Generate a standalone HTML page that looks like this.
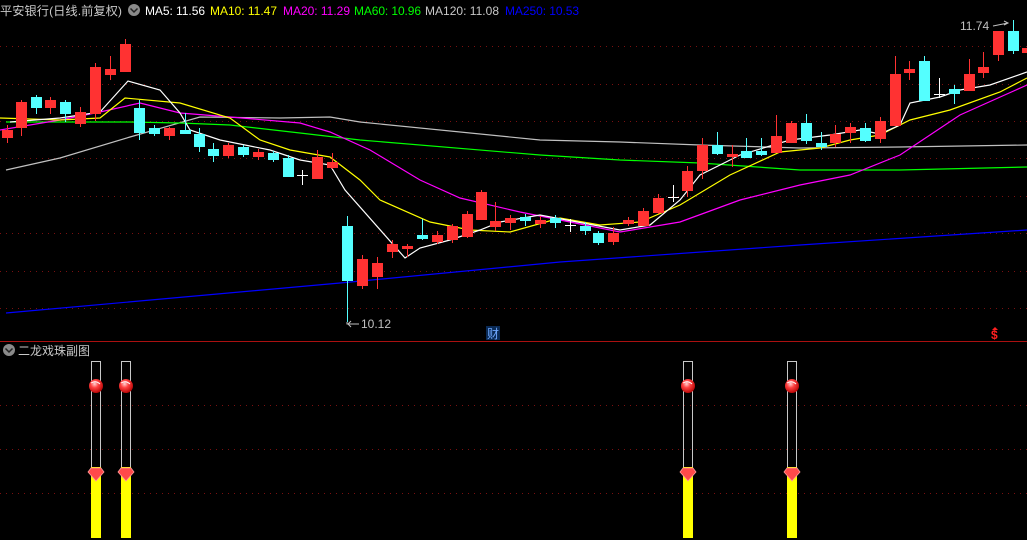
<!DOCTYPE html>
<html><head><meta charset="utf-8"><style>
html,body{margin:0;padding:0;background:#000;width:1027px;height:540px;overflow:hidden}
svg{display:block}
text{font-family:"Liberation Sans","Noto Sans CJK SC",sans-serif;font-size:12px}
.r{fill:#ff3232;stroke:#ff3232}
.c{fill:#54ffff;stroke:#54ffff}
.wr{stroke:#ff3232;stroke-width:1}
.wc{stroke:#54ffff;stroke-width:1}
.g{stroke:#7a1010;stroke-width:1;stroke-dasharray:1 5}
polyline{fill:none;stroke-width:1.2}
</style></head><body>
<svg width="1027" height="540" viewBox="0 0 1027 540" xmlns="http://www.w3.org/2000/svg">
<g>
<line class="g" x1="0" y1="46.5" x2="1027" y2="46.5"/>
<line class="g" x1="0" y1="84.5" x2="1027" y2="84.5"/>
<line class="g" x1="0" y1="121.5" x2="1027" y2="121.5"/>
<line class="g" x1="0" y1="158.5" x2="1027" y2="158.5"/>
<line class="g" x1="0" y1="196.5" x2="1027" y2="196.5"/>
<line class="g" x1="0" y1="233.5" x2="1027" y2="233.5"/>
<line class="g" x1="0" y1="271.5" x2="1027" y2="271.5"/>
<line class="g" x1="0" y1="308.5" x2="1027" y2="308.5"/>
<line class="g" x1="0" y1="405.5" x2="1027" y2="405.5"/>
<line class="g" x1="0" y1="449.5" x2="1027" y2="449.5"/>
<line class="g" x1="0" y1="493.5" x2="1027" y2="493.5"/>
</g>
<polyline stroke="#c0c0c0" points="6,170 60,158 130,137 200,117 280,118 330,117 360,122 540,140 620,142 700,145 800,148 900,147 1027,145"/>
<polyline stroke="#00ff00" points="6,122 130,122 180,123 230,125 300,133 360,140 540,155 620,160 700,163 800,170 900,170 1027,167"/>
<polyline stroke="#0000ff" points="6,313 340,283 560,262 800,245 1027,230"/>
<polyline stroke="#ff00ff" points="0,130 60,120 100,112 140,103 180,113 230,117 300,123 330,132 370,150 420,180 460,198 520,212 560,220 620,232 680,222 740,200 800,185 850,175 900,155 960,115 1027,85"/>
<polyline stroke="#ffff00" points="0,118 60,120 100,118 125,98 180,103 230,118 260,140 290,150 330,157 360,180 380,200 430,222 470,230 510,232 560,218 600,225 640,222 680,205 730,175 780,152 820,148 850,140 880,135 910,120 950,110 1000,92 1027,78"/>
<polyline stroke="#ffffff" points="10,122 60,118 100,112 128,81 160,90 180,113 190,130 220,140 270,150 300,160 330,165 345,190 405,258 420,248 450,240 480,230 500,222 540,215 620,230 650,225 680,200 700,175 740,155 790,140 830,135 860,130 880,134 900,125 910,103 940,97 960,90 990,85 1027,72"/>
<g>
<line class="wr" x1="7.5" y1="125" x2="7.5" y2="143"/><rect class="r" x="2.5" y="130.5" width="10" height="7"/>
<line class="wr" x1="21.5" y1="100" x2="21.5" y2="136"/><rect class="r" x="16.5" y="102.5" width="10" height="25"/>
<line class="wc" x1="36.5" y1="95" x2="36.5" y2="114"/><rect class="c" x="31.5" y="97.5" width="10" height="10"/>
<line class="wr" x1="50.5" y1="97" x2="50.5" y2="114"/><rect class="r" x="45.5" y="100.5" width="10" height="7"/>
<line class="wc" x1="65.5" y1="100" x2="65.5" y2="122"/><rect class="c" x="60.5" y="102.5" width="10" height="11"/>
<line class="wr" x1="80.5" y1="107" x2="80.5" y2="127"/><rect class="r" x="75.5" y="112.5" width="10" height="11"/>
<line class="wr" x1="95.5" y1="63" x2="95.5" y2="121"/><rect class="r" x="90.5" y="67.5" width="10" height="46"/>
<line class="wr" x1="110.5" y1="56" x2="110.5" y2="80"/><rect class="r" x="105.5" y="69.5" width="10" height="5"/>
<line class="wr" x1="125.5" y1="39" x2="125.5" y2="72"/><rect class="r" x="120.5" y="44.5" width="10" height="27"/>
<line class="wc" x1="139.5" y1="100" x2="139.5" y2="140"/><rect class="c" x="134.5" y="108.5" width="10" height="24"/>
<line class="wc" x1="154.5" y1="125" x2="154.5" y2="136"/><rect class="c" x="149.5" y="128.5" width="10" height="5"/>
<line class="wr" x1="169.5" y1="127" x2="169.5" y2="140"/><rect class="r" x="164.5" y="128.5" width="10" height="7"/>
<line class="wc" x1="185.5" y1="113" x2="185.5" y2="134"/><rect class="c" x="180.5" y="130.5" width="10" height="3"/>
<line class="wc" x1="199.5" y1="128" x2="199.5" y2="152"/><rect class="c" x="194.5" y="134.5" width="10" height="12"/>
<line class="wc" x1="213.5" y1="143" x2="213.5" y2="162"/><rect class="c" x="208.5" y="149.5" width="10" height="6"/>
<line class="wr" x1="228.5" y1="143" x2="228.5" y2="158"/><rect class="r" x="223.5" y="145.5" width="10" height="10"/>
<line class="wc" x1="243.5" y1="145" x2="243.5" y2="157"/><rect class="c" x="238.5" y="147.5" width="10" height="7"/>
<line class="wr" x1="258.5" y1="149" x2="258.5" y2="160"/><rect class="r" x="253.5" y="152.5" width="10" height="4"/>
<line class="wc" x1="273.5" y1="151" x2="273.5" y2="162"/><rect class="c" x="268.5" y="153.5" width="10" height="6"/>
<line class="wc" x1="288.5" y1="155" x2="288.5" y2="177"/><rect class="c" x="283.5" y="158.5" width="10" height="18"/>
<line stroke="#fff" x1="302.5" y1="170" x2="302.5" y2="185"/><line stroke="#fff" x1="297" y1="175.5" x2="308" y2="175.5"/>
<line class="wr" x1="317.5" y1="150" x2="317.5" y2="179"/><rect class="r" x="312.5" y="157.5" width="10" height="21"/>
<line class="wr" x1="332.5" y1="153" x2="332.5" y2="169"/><rect class="r" x="327.5" y="162.5" width="10" height="5"/>
<line class="wc" x1="347.5" y1="216" x2="347.5" y2="322"/><rect class="c" x="342.5" y="226.5" width="10" height="54"/>
<line class="wr" x1="362.5" y1="255" x2="362.5" y2="289"/><rect class="r" x="357.5" y="259.5" width="10" height="26"/>
<line class="wr" x1="377.5" y1="257" x2="377.5" y2="289"/><rect class="r" x="372.5" y="263.5" width="10" height="13"/>
<line class="wr" x1="392.5" y1="240" x2="392.5" y2="258"/><rect class="r" x="387.5" y="244.5" width="10" height="7"/>
<line class="wr" x1="407.5" y1="244" x2="407.5" y2="257"/><rect class="r" x="402.5" y="246.5" width="10" height="2"/>
<line class="wc" x1="422.5" y1="219" x2="422.5" y2="240"/><rect class="c" x="417.5" y="235.5" width="10" height="3"/>
<line class="wr" x1="437.5" y1="231" x2="437.5" y2="244"/><rect class="r" x="432.5" y="235.5" width="10" height="6"/>
<line class="wr" x1="452.5" y1="224" x2="452.5" y2="243"/><rect class="r" x="447.5" y="226.5" width="10" height="13"/>
<line class="wr" x1="467.5" y1="211" x2="467.5" y2="238"/><rect class="r" x="462.5" y="214.5" width="10" height="22"/>
<line class="wr" x1="481.5" y1="190" x2="481.5" y2="220"/><rect class="r" x="476.5" y="192.5" width="10" height="27"/>
<line class="wr" x1="495.5" y1="202" x2="495.5" y2="231"/><rect class="r" x="490.5" y="221.5" width="10" height="5"/>
<line class="wr" x1="510.5" y1="215" x2="510.5" y2="230"/><rect class="r" x="505.5" y="218.5" width="10" height="4"/>
<line class="wc" x1="525.5" y1="214" x2="525.5" y2="226"/><rect class="c" x="520.5" y="217.5" width="10" height="3"/>
<line class="wr" x1="540.5" y1="216" x2="540.5" y2="228"/><rect class="r" x="535.5" y="220.5" width="10" height="3"/>
<line class="wc" x1="555.5" y1="215" x2="555.5" y2="228"/><rect class="c" x="550.5" y="218.5" width="10" height="4"/>
<line stroke="#fff" x1="570.5" y1="219" x2="570.5" y2="232"/><line stroke="#fff" x1="565" y1="225.5" x2="576" y2="225.5"/>
<line class="wc" x1="585.5" y1="222" x2="585.5" y2="235"/><rect class="c" x="580.5" y="226.5" width="10" height="4"/>
<line class="wc" x1="598.5" y1="231" x2="598.5" y2="245"/><rect class="c" x="593.5" y="233.5" width="10" height="9"/>
<line class="wr" x1="613.5" y1="227" x2="613.5" y2="245"/><rect class="r" x="608.5" y="233.5" width="10" height="8"/>
<line class="wr" x1="628.5" y1="217" x2="628.5" y2="226"/><rect class="r" x="623.5" y="220.5" width="10" height="3"/>
<line class="wr" x1="643.5" y1="208" x2="643.5" y2="226"/><rect class="r" x="638.5" y="211.5" width="10" height="14"/>
<line class="wr" x1="658.5" y1="194" x2="658.5" y2="214"/><rect class="r" x="653.5" y="198.5" width="10" height="14"/>
<line stroke="#fff" x1="673.5" y1="185" x2="673.5" y2="202"/><line stroke="#fff" x1="668" y1="197.5" x2="679" y2="197.5"/>
<line class="wr" x1="687.5" y1="166" x2="687.5" y2="197"/><rect class="r" x="682.5" y="171.5" width="10" height="19"/>
<line class="wr" x1="702.5" y1="138" x2="702.5" y2="179"/><rect class="r" x="697.5" y="145.5" width="10" height="25"/>
<line class="wc" x1="717.5" y1="132" x2="717.5" y2="155"/><rect class="c" x="712.5" y="145.5" width="10" height="8"/>
<line class="wr" x1="732.5" y1="145" x2="732.5" y2="167"/><rect class="r" x="727.5" y="154.5" width="10" height="2"/>
<line class="wc" x1="746.5" y1="138" x2="746.5" y2="158"/><rect class="c" x="741.5" y="151.5" width="10" height="6"/>
<line class="wc" x1="761.5" y1="138" x2="761.5" y2="156"/><rect class="c" x="756.5" y="151.5" width="10" height="3"/>
<line class="wr" x1="776.5" y1="115" x2="776.5" y2="153"/><rect class="r" x="771.5" y="136.5" width="10" height="16"/>
<line class="wr" x1="791.5" y1="121" x2="791.5" y2="143"/><rect class="r" x="786.5" y="123.5" width="10" height="19"/>
<line class="wc" x1="806.5" y1="114" x2="806.5" y2="144"/><rect class="c" x="801.5" y="123.5" width="10" height="17"/>
<line class="wc" x1="821.5" y1="132" x2="821.5" y2="150"/><rect class="c" x="816.5" y="143.5" width="10" height="3"/>
<line class="wr" x1="835.5" y1="125" x2="835.5" y2="147"/><rect class="r" x="830.5" y="134.5" width="10" height="8"/>
<line class="wr" x1="850.5" y1="123" x2="850.5" y2="143"/><rect class="r" x="845.5" y="127.5" width="10" height="5"/>
<line class="wc" x1="865.5" y1="123" x2="865.5" y2="142"/><rect class="c" x="860.5" y="128.5" width="10" height="12"/>
<line class="wr" x1="880.5" y1="117" x2="880.5" y2="143"/><rect class="r" x="875.5" y="121.5" width="10" height="17"/>
<line class="wr" x1="895.5" y1="56" x2="895.5" y2="125"/><rect class="r" x="890.5" y="74.5" width="10" height="51"/>
<line class="wr" x1="909.5" y1="61" x2="909.5" y2="80"/><rect class="r" x="904.5" y="69.5" width="10" height="3"/>
<line class="wc" x1="924.5" y1="56" x2="924.5" y2="100"/><rect class="c" x="919.5" y="61.5" width="10" height="39"/>
<line stroke="#fff" x1="939.5" y1="78" x2="939.5" y2="98"/><line stroke="#fff" x1="934" y1="94.5" x2="945" y2="94.5"/>
<line class="wc" x1="954.5" y1="85" x2="954.5" y2="104"/><rect class="c" x="949.5" y="89.5" width="10" height="4"/>
<line class="wr" x1="969.5" y1="59" x2="969.5" y2="91"/><rect class="r" x="964.5" y="74.5" width="10" height="16"/>
<line class="wr" x1="983.5" y1="52" x2="983.5" y2="78"/><rect class="r" x="978.5" y="67.5" width="10" height="5"/>
<line class="wr" x1="998.5" y1="31" x2="998.5" y2="61"/><rect class="r" x="993.5" y="31.5" width="10" height="23"/>
<line class="wc" x1="1013.5" y1="20" x2="1013.5" y2="54"/><rect class="c" x="1008.5" y="31.5" width="10" height="19"/>
<rect class="r" x="1022.5" y="48.5" width="6" height="4"/>
</g>
<text x="0" y="15" fill="#c8c8c8" textLength="122" lengthAdjust="spacingAndGlyphs">平安银行(日线.前复权)</text>
<circle cx="134" cy="10" r="6" fill="#8a8a8a"/><path d="M130.5 8.5 L134 12 L137.5 8.5" stroke="#222" stroke-width="1.5" fill="none"/>
<text x="145" y="15" fill="#ffffff" textLength="60">MA5: 11.56</text>
<text x="210" y="15" fill="#ffff00" textLength="67">MA10: 11.47</text>
<text x="283" y="15" fill="#ff00ff" textLength="67">MA20: 11.29</text>
<text x="354" y="15" fill="#00ff00" textLength="67">MA60: 10.96</text>
<text x="425" y="15" fill="#c8c8c8" textLength="74">MA120: 11.08</text>
<text x="505" y="15" fill="#0000ff" textLength="74">MA250: 10.53</text>
<text x="960" y="30" fill="#c0c0c0">11.74</text>
<path d="M993 26 L1008 23 M1004 21 L1008 23 L1004 25" stroke="#c0c0c0" fill="none"/>
<path d="M347 322 L347 324 L359 324 M351 321 L348 324 L351 327" stroke="#c0c0c0" fill="none"/>
<text x="361" y="328" fill="#c0c0c0">10.12</text>
<rect x="486" y="326" width="14" height="14" fill="#0a2a55"/>
<text x="487" y="338" fill="#6fa8ff">财</text>
<text x="991" y="339" fill="#ff2020" font-weight="bold">$</text>
<path d="M992 330 L995 327 L998 330 Z" fill="#ff2020"/>
<line x1="0" y1="341.5" x2="1027" y2="341.5" stroke="#aa1010"/>
<circle cx="9" cy="350" r="6" fill="#8a8a8a"/><path d="M5.5 348.5 L9 352 L12.5 348.5" stroke="#222" stroke-width="1.5" fill="none"/>
<text x="18" y="355" fill="#c8c8c8">二龙戏珠副图</text>
<defs>
<radialGradient id="bg" cx="0.4" cy="0.35" r="0.7"><stop offset="0" stop-color="#ffd0d0"/><stop offset="0.4" stop-color="#ff4040"/><stop offset="1" stop-color="#b00000"/></radialGradient>
<g id="tube">
<rect x="0.5" y="361.5" width="9" height="106" fill="none" stroke="#c8c8c8"/>
<rect x="0" y="467" width="10" height="71" fill="#ffff00"/>
<circle cx="5" cy="386" r="7" fill="url(#bg)"/>
<path d="M0 383 Q5 380 9 384" stroke="#fff" stroke-width="1" fill="none"/>
<path d="M-3 472 L0 468 L10 468 L13 472 L5 481 Z" fill="#ff4a4a" stroke="#ff9a9a" stroke-width="0.8"/>
</g>
</defs>
<use href="#tube" x="91"/>
<use href="#tube" x="121"/>
<use href="#tube" x="683"/>
<use href="#tube" x="787"/>
</svg>
</body></html>
